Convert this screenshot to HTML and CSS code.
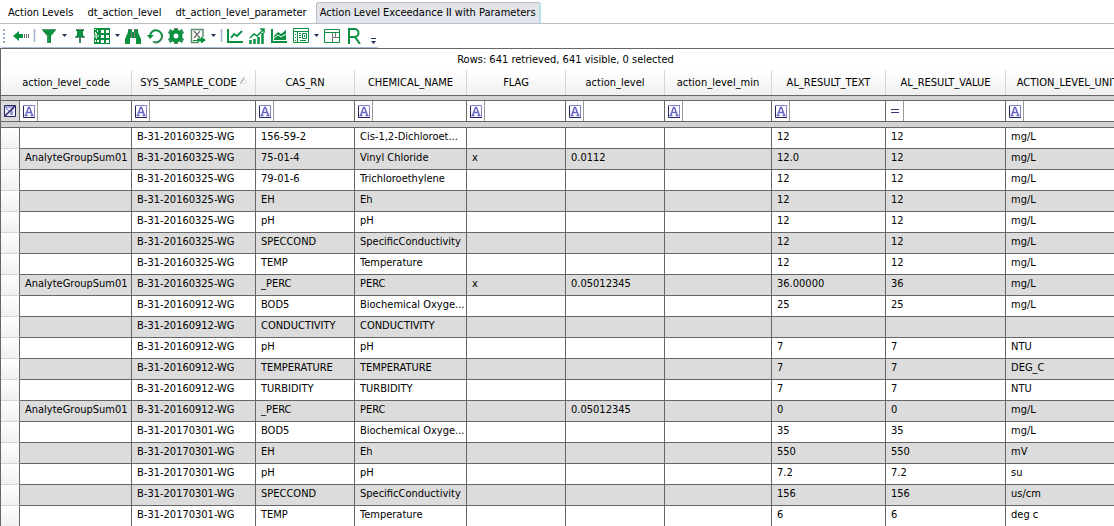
FILE: index.html
```html
<!DOCTYPE html>
<html lang="en">
<head>
<meta charset="utf-8">
<title>Action Level Exceedance II with Parameters</title>
<link rel="stylesheet" href="styles.css">
</head>
<body>
<nav class="tabs">
<button class="tab">Action Levels</button>
<button class="tab">dt_action_level</button>
<button class="tab">dt_action_level_parameter</button>
<button class="tab active">Action Level Exceedance II with Parameters</button>
</nav>
<div class="toolbar" id="toolbar"></div>
<main class="grid">
<p class="summary">Rows: 641 retrieved, 641 visible, 0 selected</p>
<table class="data">
<colgroup><col class="w-mark"><col class="w-code"><col class="w-sample"><col class="w-mid"><col class="w-code"><col class="w-mid"><col class="w-mid"><col class="w-text"><col class="w-value"><col class="w-num"><col class="w-unit"></colgroup>
<thead id="head"></thead>
<tbody id="body"></tbody>
</table>
</main>
<script src="app.js"></script>
</body>
</html>
```

FILE: styles.css
```css
* { box-sizing: border-box; }
body {
  margin: 0;
  min-height: 100vh;
  display: flex;
  flex-direction: column;
  background: #fff;
  color: #000;
  font: 11px/16px "DejaVu Sans Condensed", "DejaVu Sans", sans-serif;
  overflow: hidden;
}
button, input { font: inherit; color: inherit; margin: 0; padding: 0; border: 0; background: none; }
.tabs {
  display: flex;
  align-items: flex-end;
  height: 24px;
  padding-left: 3px;
  border-bottom: 1px solid #bdbdbd;
  white-space: nowrap;
}
.tab { height: 21px; padding: 0 5px; margin-right: 4px; }
.tab.active {
  padding: 0 3px;
  margin-right: 0;
  border: 1px solid #b9bfca;
  border-right: 2px solid #b5e0e6;
  border-bottom: 0;
  border-radius: 3px 3px 0 0;
  background: linear-gradient(#e3e3e3, #e1e6f0);
}
.toolbar {
  display: flex;
  align-items: center;
  align-self: flex-start;
  height: 24px;
  padding-left: 2px;
  border-bottom: 1px solid #a9bcd6;
  border-radius: 0 0 3px 3px;
}
.tool { display: flex; align-items: center; justify-content: center; height: 24px; flex: none; }
.tool svg { display: block; flex: none; }
.grid { flex: 1; border-top: 1px solid #666; border-left: 1px solid #666; overflow: hidden; }
.summary { margin: 0; height: 21px; line-height: 21px; text-align: center; padding-left: 16px; }
.data { table-layout: fixed; width: 1128px; border-collapse: separate; border-spacing: 0; }
.w-mark { width: 19px; }
.w-code { width: 112px; }
.w-sample { width: 124px; }
.w-mid { width: 99px; }
.w-text { width: 107px; }
.w-value { width: 114px; }
.w-num { width: 120px; }
.w-unit { width: 124px; }
th, td { padding: 0; white-space: nowrap; overflow: hidden; }
.titles th {
  height: 25px;
  font-weight: normal;
  text-align: center;
  border-right: 1px solid #d5d5d5;
  background: linear-gradient(#fff, #f0f0f0);
}
.sort { margin-left: 3px; vertical-align: 2px; }
.band td { height: 6px; background: #d3d3d3; border-top: 1px solid #666; border-bottom: 1px solid #666; }
.band.low td { height: 7px; }
.filters td { height: 20px; border-right: 1px solid #666; }
.filters .clear { background: #dcdcdc; }
.clear button { display: block; margin: 0 auto; }
.clear svg { display: block; }
.filter { display: flex; height: 20px; }
.op {
  flex: none;
  width: 18px;
  display: flex;
  align-items: center;
  justify-content: center;
  border-right: 1px solid #999;
}
.filter input { flex: 1; min-width: 0; padding: 0 4px; outline: 0; }
.row td { height: 21px; padding: 0 0 2px 5px; line-height: 16px; border-right: 1px solid #666; border-bottom: 1px solid #666; text-overflow: ellipsis; }
.row:nth-child(even) td { background: #dcdcdc; }
.row .mark, .row:nth-child(even) .mark { padding: 0; background: linear-gradient(#fff, #f0f0f0); border-bottom-color: #d5d5d5; }
```

FILE: app.js
```js
const icons = {
  grip: '<g fill="#9aa9c4"><path d="M1 1h2v2H1zM1 5h2v2H1zM1 9h2v2H1zM1 13h2v2H1z"/></g>',
  sep: '<path d="M1.500 1v13" stroke="#9db4d0" stroke-width="1.500"/>',
  caret: '<path d="M0 6h5L2.500 9z" transform="translate(0 -5)" fill="#1f3558"/>',
  back: '<path d="M0 8l6-5v3h4v4H6v3z" fill="#0a9140"/><path d="M11.500 6v4M13.500 6v4M15.500 6v4" stroke="#666"/>',
  filter: '<path d="M1 2h14L10 8v7H6V8z" fill="#0a9140"/><path d="M1 1.500h14M2 3l5 5v7" fill="none" stroke="#6f8f75"/>',
  pin: '<path d="M4 1h8v2h-1v4l2 2v1H9v5H7v-5H3V9l2-2V3H4z" fill="#0a9140"/><path d="M4 1.500h8M3 9.500h10M8 10v5" stroke="#777"/>',
  table: '<path d="M0 0h16v16H0z" fill="#0a9140"/><path d="M7 2h3v3H7zM12 2h3v3h-3zM7 7h3v3H7zM12 7h3v3h-3zM7 12h3v3H7zM12 12h3v3h-3zM1 1h1v1H1zM3 2h1v2H3zM1 4h1v2H1zM1 12h1v2H1zM3 12h2v2H3zM0 8l3-3v2h2v2H3v2z" fill="#fff"/><path d="M1 8h4" stroke="#0a9140"/>',
  find: '<path d="M3 1h4v3h2V1h4v3l3 7v5h-5v-6H5v6H0v-5l3-7z" fill="#0a9140"/><path d="M3 1.500h4M9 1.500h4M6.500 4v6M9.500 4v6" stroke="#777"/>',
  undo: '<path d="M3 8a6 6 0 1 1 3 5.500" fill="none" stroke="#0a9140" stroke-width="2"/><path d="M7 14.500a6 6 0 0 0 8-6" fill="none" stroke="#777"/><path d="M0 7h7l-4 4z" fill="#0a9140"/>',
  gear: '<circle cx="8" cy="8" r="4.500" fill="none" stroke="#0a9140" stroke-width="4"/><path d="M6 0h4v3H6zM6 13h4v3H6zM0 5l2-4 3 2-2 4zM14 1l2 4-3 2-2-4zM0 11l3-2 2 4-3 2zM16 11l-3-2-2 4 3 2z" fill="#0a9140"/><path d="M6 .5h4M6 15.500h4M1 5l1-2M15 5l-1-2M1 11l1 2M15 11l-1 2" stroke="#777"/>',
  excel: '<path d="M13 9V1.500H1.500v13H9" fill="none" stroke="#5f8a6c" stroke-width="1.500"/><path d="M4 3l6 7M10 3l-6 7" stroke="#777" stroke-width="1.500"/><path d="M3 12.500h4" stroke="#0a9140"/><path d="M7 10.500h4V8.500l5 3.500-5 3.500v-2H7z" fill="#0a9140"/>',
  line: '<path d="M1 1v13h15M4 10l3-4 3 2 5-5" fill="none" stroke="#0a9140" stroke-width="2"/>',
  bars: '<path d="M1.500 16v-4M5.500 16v-5M9.500 16V9M13.500 16V5" stroke="#0a9140" stroke-width="2.500"/><path d="M1 10l4-4 3 2 7-7M11 1h4v4" fill="none" stroke="#0a9140" stroke-width="1.500"/>',
  area: '<path d="M1 1v13h15" fill="none" stroke="#0a9140" stroke-width="2"/><path d="M3 12V8l4-4 3 2 5-4v10z" fill="#0a9140"/><path d="M3 10l4-3 3 2 5-3" fill="none" stroke="#fff"/>',
  form: '<path d="M.5.5h15v14H.5zM0 3.500h16M4.500 4v11" fill="none" stroke="#0a9140"/><path d="M2 6.500h1M2 9.500h1M2 12.500h1M6 5.500h2M6 7.500h2M6 9.500h2M7 12.500h6" stroke="#0a9140"/><path d="M9.500 5.500h4v5h-4z" fill="none" stroke="#0a9140"/><path d="M11 7h1v2h-1z" fill="#0a9140"/>',
  panel: '<path d="M.5 1.500h15v13H.5zM0 4.500h16" fill="none" stroke="#0a9140"/><path d="M8.500 5v9M9 9.500h6M11.500 5v4" fill="none" stroke="#777"/>',
  r: '<path d="M2 16V1h5.500a4 4 0 0 1 0 8H2M8 9l5 7" fill="none" stroke="#0a9140" stroke-width="2"/>',
  more: '<path d="M0 12h5v1H0zM0 15h5l-2.500 3z" fill="#1f3558"/>'
};
// name, slot width, drawing width, label, drawing height
const tools = [
  ['grip', 4, 4], ['', 7], ['back', 16, 16, 'Back'], ['', 4], ['sep', 3, 3], ['', 5],
  ['filter', 16, 16, 'Filter'], ['', 5], ['caret', 5, 5, 'Filter options', 5], ['', 5],
  ['pin', 16, 16, 'Pin'], ['', 6], ['table', 16, 16, 'Columns'], ['', 5], ['caret', 5, 5, 'Column options', 5], ['', 5],
  ['find', 16, 16, 'Find'], ['', 6], ['undo', 16, 16, 'Refresh'], ['', 5], ['gear', 16, 16, 'Settings'], ['', 6],
  ['excel', 16, 16, 'Export'], ['', 5], ['caret', 5, 5, 'Export options', 5], ['', 4], ['sep', 3, 3], ['', 4],
  ['line', 16, 16, 'Line chart'], ['', 6], ['bars', 16, 16, 'Bar chart'], ['', 6], ['area', 16, 16, 'Area chart'], ['', 6],
  ['form', 16, 16, 'Form'], ['', 5], ['caret', 5, 5, 'Form options', 5], ['', 5],
  ['panel', 16, 16, 'Panel'], ['', 7], ['r', 14, 14, 'R'], ['', 10], ['more', 5, 5, 'More', 20], ['', 3]
];
document.getElementById('toolbar').innerHTML = tools.map(([name, w, dw, label, h = 16]) => {
  if (!name) return `<span class="tool" style="width:${w}px"></span>`;
  const svg = `<svg width="${dw}" height="${h}" viewBox="0 0 ${dw} ${h}" aria-hidden="true">${icons[name]}</svg>`;
  return label
    ? `<button class="tool" aria-label="${label}" style="width:${w}px">${svg}</button>`
    : `<span class="tool" style="width:${w}px">${svg}</span>`;
}).join('');

const columns = ['action_level_code', 'SYS_SAMPLE_CODE', 'CAS_RN', 'CHEMICAL_NAME', 'FLAG', 'action_level', 'action_level_min', 'AL_RESULT_TEXT', 'AL_RESULT_VALUE', 'ACTION_LEVEL_UNIT'];
const sort = '<svg class="sort" width="7" height="7" viewBox="0 0 7 7"><path d="M.5 6.500L4 .5" stroke="#888"/><path d="M4 .5l2.500 6h-6" fill="none" stroke="#e4e4e4"/></svg>';
const letter = '<svg width="12" height="13" viewBox="0 0 12 13"><path d="M.5 12V.5H12" fill="none" stroke="#8585cc"/><path d="M11.500 1v11.500" stroke="#8585cc"/><path d="M.5 1v11.500H12" fill="none" stroke="#27275f"/><path d="M2.500 10.500L5.500 2.500h1l3 8M4 7.500h4M1.500 10.500h3M7.500 10.500h3" fill="none" stroke="#6464c4" stroke-width="1.400"/></svg>';
const equals = '<svg width="8" height="6" viewBox="0 0 8 6"><path d="M0 1.500h8M0 4.500h8" stroke="#3c3c78"/></svg>';
const clear = '<svg width="12" height="12" viewBox="0 0 12 12"><path d="M.5.5h11v11H.5z" fill="#eef" stroke="#27275f"/><path d="M1 2h9M2 3l3 3M10 3L7 6v4M8 6v4" fill="none" stroke="#6464c4"/><path d="M1 11L11 1" stroke="#27275f" stroke-width="1.500"/></svg>';
document.getElementById('head').innerHTML =
  '<tr class="titles">' + columns.map((c, i) => `<th scope="col"${i === 0 ? ' colspan="2"' : ''}>${c}${i === 1 ? sort : ''}</th>`).join('') + '</tr>' +
  '<tr class="band"><td colspan="11"></td></tr>' +
  `<tr class="filters"><td class="clear"><button aria-label="Clear filters">${clear}</button></td>` +
  columns.map((c, i) => `<td><div class="filter"><button class="op" aria-label="${c} operator">${i === 8 ? equals : letter}</button><input type="text" aria-label="${c} filter"></div></td>`).join('') + '</tr>' +
  '<tr class="band low"><td colspan="11"></td></tr>';

const A = 'B-31-20160325-WG', B = 'B-31-20160912-WG', C = 'B-31-20170301-WG', S = 'AnalyteGroupSum01';
const rows = [
  ['', A, '156-59-2', 'Cis-1,2-Dichloroet...', '', '', '', '12', '12', 'mg/L'],
  [S, A, '75-01-4', 'Vinyl Chloride', 'x', '0.0112', '', '12.0', '12', 'mg/L'],
  ['', A, '79-01-6', 'Trichloroethylene', '', '', '', '12', '12', 'mg/L'],
  ['', A, 'EH', 'Eh', '', '', '', '12', '12', 'mg/L'],
  ['', A, 'pH', 'pH', '', '', '', '12', '12', 'mg/L'],
  ['', A, 'SPECCOND', 'SpecificConductivity', '', '', '', '12', '12', 'mg/L'],
  ['', A, 'TEMP', 'Temperature', '', '', '', '12', '12', 'mg/L'],
  [S, A, '_PERC', 'PERC', 'x', '0.05012345', '', '36.00000', '36', 'mg/L'],
  ['', B, 'BOD5', 'Biochemical Oxyge...', '', '', '', '25', '25', 'mg/L'],
  ['', B, 'CONDUCTIVITY', 'CONDUCTIVITY', '', '', '', '', '', ''],
  ['', B, 'pH', 'pH', '', '', '', '7', '7', 'NTU'],
  ['', B, 'TEMPERATURE', 'TEMPERATURE', '', '', '', '7', '7', 'DEG_C'],
  ['', B, 'TURBIDITY', 'TURBIDITY', '', '', '', '7', '7', 'NTU'],
  [S, B, '_PERC', 'PERC', '', '0.05012345', '', '0', '0', 'mg/L'],
  ['', C, 'BOD5', 'Biochemical Oxyge...', '', '', '', '35', '35', 'mg/L'],
  ['', C, 'EH', 'Eh', '', '', '', '550', '550', 'mV'],
  ['', C, 'pH', 'pH', '', '', '', '7.2', '7.2', 'su'],
  ['', C, 'SPECCOND', 'SpecificConductivity', '', '', '', '156', '156', 'us/cm'],
  ['', C, 'TEMP', 'Temperature', '', '', '', '6', '6', 'deg c']
];
document.getElementById('body').innerHTML = rows.map(r =>
  '<tr class="row"><td class="mark"></td>' + r.map(v => `<td>${v}</td>`).join('') + '</tr>').join('');
```
